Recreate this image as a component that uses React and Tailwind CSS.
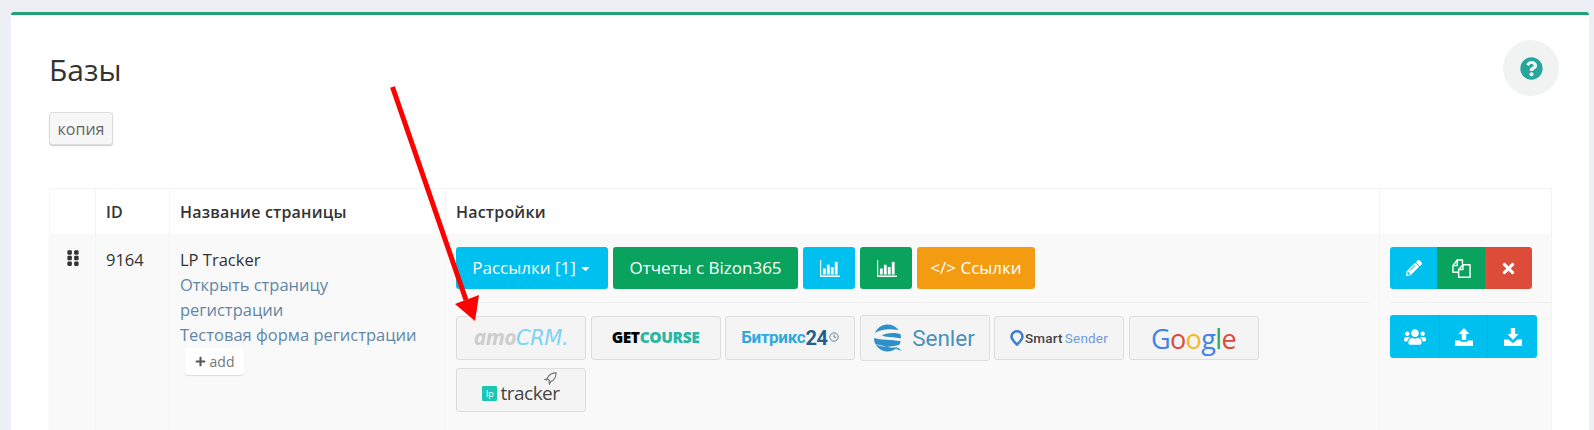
import React from "react";
import { FaGripVertical, FaPlus, FaPencilAlt, FaTimes, FaUsers, FaQuestionCircle, FaCaretDown } from "react-icons/fa";

const font = { fontFamily: '"Open Sans","Noto Sans",sans-serif' };

const Chart = ({ className = "" }) => (
  <svg viewBox="0 0 22 18" className={className} fill="currentColor">
    <path d="M1 0h1.2v16.400H22V18H1z" />
    <rect x="4" y="9" width="3" height="6.400" />
    <rect x="8.200" y="5" width="3" height="10.400" />
    <rect x="12.400" y="7.500" width="3" height="7.900" />
    <rect x="16.600" y="2" width="3" height="13.400" />
  </svg>
);
const Copy = () => (
  <svg viewBox="0 0 20 20" className="w-[19px] h-[19px]" fill="none" stroke="currentColor" strokeWidth="1.500" strokeLinejoin="round">
    <path d="M1 7 5.500 1H11V5" />
    <path d="M5.500 1V7H1V14H6.500" />
    <path d="M11.500 6H19V19.200H7V11z" />
    <path d="M11.500 6V11H7" />
  </svg>
);
const Upload = () => (
  <svg viewBox="0 0 18 18" className="w-[18px] h-[18px]" fill="currentColor">
    <path d="M9 0 14.500 6H11.200V12H6.800V6H3.500z" />
    <path d="M0 12.500h5.500v1.200h7v-1.200H18V18H0z" />
  </svg>
);
const Download = () => (
  <svg viewBox="0 0 18 18" className="w-[18px] h-[18px]" fill="currentColor">
    <path d="M6.800 0h4.400v6h3.300L9 12 3.500 6h3.300z" />
    <path d="M0 11.500h4.500L9 15l4.500-3.500H18V18H0z" />
  </svg>
);
const Btn = ({ c, w, children }) => (
  <div className={`h-[42px] ${w} ${c} rounded-[3px] text-white text-[17px] flex items-center justify-center whitespace-nowrap`}>{children}</div>
);
const Logo = ({ children, big }) => (
  <div className={`w-[130px] ${big ? "h-[46px] -my-px" : "h-[44px]"} bg-[#f4f4f4] border border-[#dddddd] rounded-[3px] flex items-center justify-center overflow-hidden`}>
    {children}
  </div>
);
const Icon = ({ c, w, children }) => <div className={`${w} ${c} h-full flex items-center justify-center text-white`}>{children}</div>;
const Ic = ({ w, children }) => <div className={`${w} h-full flex items-center justify-center text-white border-r border-[#00b3de] last:border-r-0`}>{children}</div>;

export default function App() {
  return (
    <div className="relative w-[1594px] h-[430px] overflow-hidden bg-[#ecf0f5] pt-[12px] pl-[11px]" style={font}>
      <div className="w-[1578px] h-[500px] bg-white border-t-[3px] border-[#20a275] rounded-t-[3px] pl-[38px] pt-[32px]">
        <div className="flex justify-between pr-[30px] h-[47px]">
          <h1 className="text-[30px] leading-[45px] text-[#333]">Базы</h1>
          <div className="w-[56px] h-[56px] -mt-[7px] rounded-full bg-[#f1f3f3] flex items-center justify-center">
            <FaQuestionCircle className="w-[23px] h-[23px] text-[#26a69a]" />
          </div>
        </div>
        <div className="mt-[18px] w-[64px] h-[33px] bg-[#f7f7f7] border border-[#dddddd] rounded-[3px] shadow-[0_1px_1px_rgba(0,0,0,0.2)] text-[16px] text-[#666] flex items-center justify-center">копия</div>

        <div className="mt-[43px] w-[1503px] border border-[#f4f4f4]">
          <div className="flex h-[45px] text-[16px] font-semibold tracking-[0.2px] text-[#333] items-center">
            <div className="w-[46px] h-full border-r border-[#f4f4f4]" />
            <div className="w-[74px] h-full border-r border-[#f4f4f4] pl-[10px] flex items-center">ID</div>
            <div className="w-[276px] h-full border-r border-[#f4f4f4] pl-[10px] flex items-center">Название страницы</div>
            <div className="w-[934px] h-full border-r border-[#f4f4f4] pl-[10px] flex items-center">Настройки</div>
            <div className="flex-1" />
          </div>
          <div className="flex h-[250px] bg-[#f9f9f9] text-[16.500px] text-[#333]">
            <div className="w-[46px] border-r border-[#f4f4f4] pt-[15px] flex justify-center">
              <FaGripVertical className="w-[18px] h-[18px] text-[#333]" />
            </div>
            <div className="w-[74px] border-r border-[#f4f4f4] pl-[10px] pt-[13px] leading-[25px]">9164</div>
            <div className="w-[276px] border-r border-[#f4f4f4] pl-[10px] pt-[13px] leading-[25px]">
              <div>LP Tracker</div>
              <div className="text-[#6286a5] w-[220px]">Открыть страницу регистрации</div>
              <div className="text-[#6286a5] whitespace-nowrap">Тестовая форма регистрации</div>
              <div className="ml-[5px] mt-[1px] w-[59px] h-[27px] bg-white rounded-[3px] shadow-[0_1px_1px_rgba(0,0,0,0.12)] text-[14px] text-[#777] flex items-center justify-center gap-[4px]">
                <FaPlus className="w-[11px] h-[11px] text-[#555]" />add
              </div>
            </div>
            <div className="w-[934px] border-r border-[#f4f4f4] pl-[10px] pt-[13px]">
              <div className="flex gap-[5px]">
                <Btn c="bg-[#00c0ef]" w="w-[152px]">Рассылки [1]<FaCaretDown className="ml-[3px] w-[13px] h-[13px]" /></Btn>
                <Btn c="bg-[#0aa35e]" w="w-[185px]">Отчеты с Bizon365</Btn>
                <Btn c="bg-[#00c0ef]" w="w-[52px]"><Chart className="w-[21px] h-[17px]" /></Btn>
                <Btn c="bg-[#0aa35e]" w="w-[52px]"><Chart className="w-[21px] h-[17px]" /></Btn>
                <Btn c="bg-[#f39c12]" w="w-[118px]">&lt;/&gt;&nbsp;Ссылки</Btn>
              </div>
              <div className="mt-[13px] mb-[13px] mr-[10px] border-t border-[#eeeeee]" />
              <div className="flex flex-wrap gap-x-[4.500px] gap-y-[8px] w-[820px]">
                <Logo>
                  <span className="text-[21px] italic font-bold whitespace-nowrap tracking-[-0.5px]" style={{ fontFamily: '"Open Sans",sans-serif' }}>
                    <span className="text-[#cdcdcd]">amo</span><span className="text-[#7fd3f2] font-normal" style={{ fontFamily: '"DejaVu Sans",sans-serif' }}>CRM.</span>
                  </span>
                </Logo>
                <Logo>
                  <span className="text-[15.500px] font-extrabold tracking-[-0.4px]"><span className="text-black">GET</span><span className="text-[#2bb5a5]">COURSE</span></span>
                </Logo>
                <Logo>
                  <span className="text-[17px] font-bold tracking-[-0.3px] flex items-center whitespace-nowrap" style={{ fontFamily: '"Roboto",sans-serif' }}>
                    <span className="text-[#2fa9dc]">Битрикс</span><span className="text-[#215f8f] text-[20px]">24</span>
                    <svg viewBox="0 0 12 12" className="w-[10px] h-[10px] ml-[1px] -mt-[2px] text-[#4a6f8f]" fill="none" stroke="currentColor" strokeWidth="1"><circle cx="6" cy="6" r="5" /><path d="M6 3v3.300h2.500" /></svg>
                  </span>
                </Logo>
                <Logo big>
                  <svg viewBox="0 0 30 30" className="w-[29px] h-[30px] mr-[9px]">
                    <circle cx="14" cy="15" r="14" fill="#2f8fc7" />
                    <path d="M-1 11C8 5 18 5 30 8L30 11.500C20 8.500 12 10 8 12.500 14 15 24 14 30 16V19C22 16.500 12 18 0 15z" fill="#f4f4f4" />
                    <path d="M0 21C8 25 18 25 30 21L29 24 18 25z" fill="#f4f4f4" />
                    <path d="M22 26l7 2.500-4-3.500z" fill="#2f8fc7" />
                  </svg>
                  <span className="text-[22.500px] text-[#4a92bb] leading-none" style={{ fontFamily: '"Roboto",sans-serif', fontWeight: 400 }}>Senler</span>
                </Logo>
                <Logo>
                  <svg viewBox="0 0 14 16" className="w-[14px] h-[16px] mr-[1px]" fill="none" stroke="#3f7fd0" strokeWidth="2.600"><path d="M7 14.500C4 11.500 1.500 9.500 1.500 6.700a5.500 5.500 0 0 1 11 0C12.500 9.500 10 11.500 7 14.500z" /></svg>
                  <span className="text-[13.500px] whitespace-nowrap tracking-[0.2px]" style={{ fontFamily: '"Roboto",sans-serif' }}><span className="text-[#444] font-medium">Smart</span><span className="text-[#6f9bd8] ml-[2px]">Sender</span></span>
                </Logo>
                <Logo>
                  <span className="text-[27px] leading-none font-normal tracking-[-0.6px]" style={{ fontFamily: '"Open Sans",sans-serif' }}>
                    <span className="text-[#3f83e8]">G</span><span className="text-[#e3483c]">o</span><span className="text-[#f4b91e]">o</span><span className="text-[#3f83e8]">g</span><span className="text-[#31a853]">l</span><span className="text-[#e3483c]">e</span>
                  </span>
                </Logo>
                <Logo>
                  <div className="relative flex items-center gap-[3px] mt-[6px]">
                    <div className="w-[15px] h-[15px] bg-[#1cc6b4] rounded-[1px] text-white text-[9px] leading-[15px] text-center">lp</div>
                    <span className="text-[19px] leading-none text-[#444] tracking-[-0.5px]">tracker</span>
                    <svg viewBox="0 0 14 14" className="absolute right-[3px] -top-[12px] w-[13px] h-[13px] text-[#777]" fill="none" stroke="currentColor" strokeWidth="1.200"><path d="M13 1C9 1 5 3.500 3.500 7L7 10.500C10.500 9 13 5 13 1zM3.500 7 1 8l2.500 1M7 10.500 6 13l-1-2.500" /></svg>
                  </div>
                </Logo>
              </div>
            </div>
            <div className="flex-1 pl-[10px] pt-[13px]">
              <div className="flex h-[42px] w-[142px] rounded-[3px] overflow-hidden">
                <Icon c="bg-[#00c0ef]" w="w-[47px]"><FaPencilAlt className="w-[16px] h-[16px]" /></Icon>
                <Icon c="bg-[#0aa35e]" w="w-[48px]"><Copy /></Icon>
                <Icon c="bg-[#dd4b39]" w="w-[47px]"><FaTimes className="w-[17px] h-[17px]" /></Icon>
              </div>
              <div className="mt-[13px] mb-[12px] border-t border-[#eeeeee]" />
              <div className="flex h-[43px] w-[147px] rounded-[3px] overflow-hidden bg-[#00c0ef]">
                <Ic w="w-[50px]"><FaUsers className="w-[22px] h-[22px]" /></Ic>
                <Ic w="w-[48px]"><Upload /></Ic>
                <Ic w="w-[49px]"><Download /></Ic>
              </div>
            </div>
          </div>
        </div>
      </div>
      <svg className="absolute left-0 top-0 w-[1594px] h-[430px] pointer-events-none" viewBox="0 0 1594 430">
        <line x1="392.500" y1="87" x2="466" y2="300" stroke="#ff0000" strokeWidth="5" />
        <polygon points="475,321 455,304 479,295" fill="#ff0000" />
      </svg>
    </div>
  );
}
